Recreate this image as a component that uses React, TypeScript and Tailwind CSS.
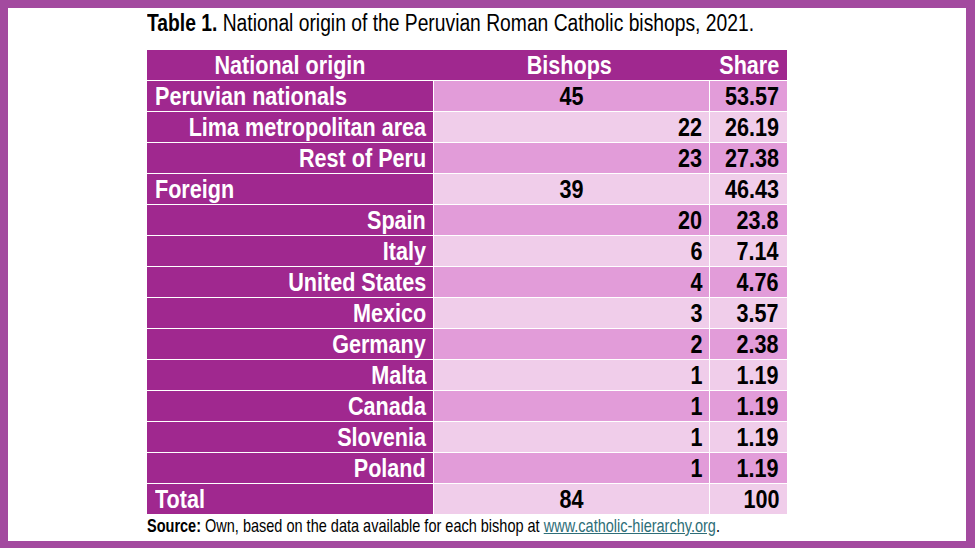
import React from "react";

type Row = { label: string; align: "left" | "right"; bishops: string; bAlign: "center" | "right"; share: string };

const rows: Row[] = [
  { label: "Peruvian nationals", align: "left", bishops: "45", bAlign: "center", share: "53.57" },
  { label: "Lima metropolitan area", align: "right", bishops: "22", bAlign: "right", share: "26.19" },
  { label: "Rest of Peru", align: "right", bishops: "23", bAlign: "right", share: "27.38" },
  { label: "Foreign", align: "left", bishops: "39", bAlign: "center", share: "46.43" },
  { label: "Spain", align: "right", bishops: "20", bAlign: "right", share: "23.8" },
  { label: "Italy", align: "right", bishops: "6", bAlign: "right", share: "7.14" },
  { label: "United States", align: "right", bishops: "4", bAlign: "right", share: "4.76" },
  { label: "Mexico", align: "right", bishops: "3", bAlign: "right", share: "3.57" },
  { label: "Germany", align: "right", bishops: "2", bAlign: "right", share: "2.38" },
  { label: "Malta", align: "right", bishops: "1", bAlign: "right", share: "1.19" },
  { label: "Canada", align: "right", bishops: "1", bAlign: "right", share: "1.19" },
  { label: "Slovenia", align: "right", bishops: "1", bAlign: "right", share: "1.19" },
  { label: "Poland", align: "right", bishops: "1", bAlign: "right", share: "1.19" },
  { label: "Total", align: "left", bishops: "84", bAlign: "center", share: "100" },
];

function Cell({
  children,
  align,
  className,
}: {
  children: React.ReactNode;
  align: "left" | "center" | "right";
  className: string;
}) {
  const justify =
    align === "left" ? "justify-start pl-[8px]" : align === "center" ? "justify-center" : "justify-end pr-[7px]";
  const origin = align === "left" ? "origin-left" : align === "center" ? "origin-center" : "origin-right";
  return (
    <div className={`flex items-center ${justify} ${className}`}>
      <span className={`shrink-0 whitespace-nowrap inline-block scale-x-[0.83] ${origin}`}>{children}</span>
    </div>
  );
}

export default function App() {
  return (
    <div className="w-[975px] h-[548px] bg-[#a34a9f] pt-[8px] pl-[8px] pr-[9px] pb-[7px] flex font-['Liberation_Sans',Arial,sans-serif]">
      <div className="flex-1 bg-white flex flex-col pl-[139px] overflow-hidden">
        <div className="h-[42px] pt-[1px] text-[23.5px] leading-[28px] text-black flex">
          <span className="shrink-0 whitespace-nowrap inline-block scale-x-[0.82] origin-left">
            <span className="font-bold">Table 1.</span> National origin of the Peruvian Roman Catholic bishops, 2021.
          </span>
        </div>
        <div className="w-[640px] flex flex-col gap-px font-bold text-[26px] leading-[30px]">
          <div className="h-[30px] bg-[#a0288f] flex text-white">
            <Cell align="center" className="w-[287px]">National origin</Cell>
            <Cell align="center" className="w-[276px]">Bishops</Cell>
            <Cell align="right" className="flex-1 pr-[8px]">Share</Cell>
          </div>
          {rows.map((r, i) => {
            const bg = i % 2 === 0 ? "bg-[#e29cd9]" : "bg-[#f0cdea]";
            return (
              <div key={r.label} className="h-[30px] flex gap-px">
                <Cell align={r.align} className="w-[286px] bg-[#a0288f] text-white">
                  {r.label}
                </Cell>
                <Cell align={r.bAlign} className={`w-[275px] ${bg} text-black`}>
                  {r.bishops}
                </Cell>
                <Cell align="right" className={`flex-1 ${bg} text-black pr-[8px]`}>
                  {r.share}
                </Cell>
              </div>
            );
          })}
        </div>
        <div className="mt-[1px] text-[17.7px] leading-[22px] text-black flex">
          <span className="shrink-0 whitespace-nowrap inline-block scale-x-[0.82] origin-left">
            <span className="font-bold">Source:</span> Own, based on the data available for each bishop at{" "}
            <span className="text-[#2e6e78] underline">www.catholic-hierarchy.org</span>.
          </span>
        </div>
      </div>
    </div>
  );
}
